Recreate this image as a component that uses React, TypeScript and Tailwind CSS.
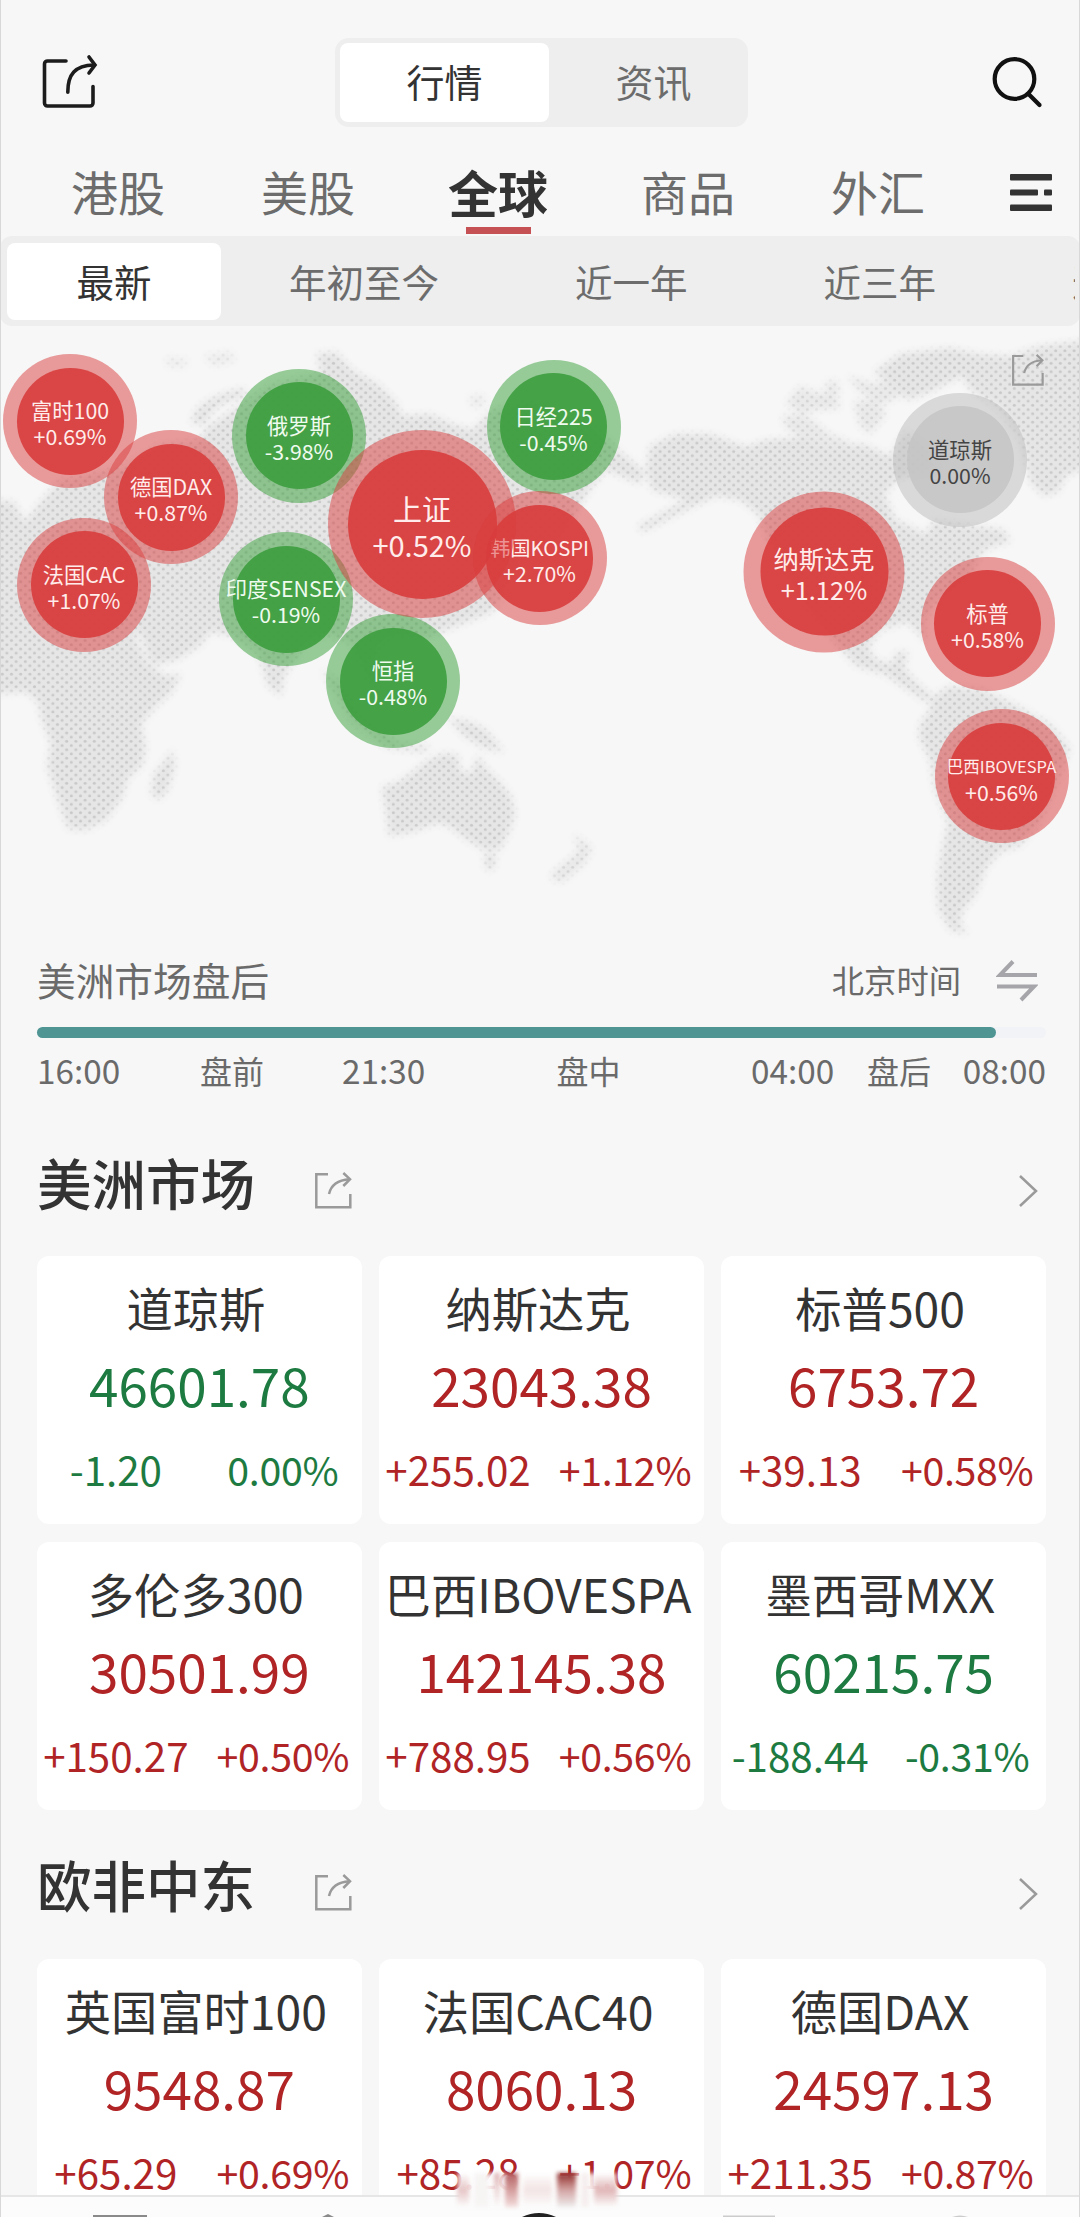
import React from "react";

type Trend = "up" | "down" | "flat";

interface Quote {
  name: string;
  price: string;
  change: string;
  percent: string;
  trend: Trend;
}

interface Bubble {
  name: string;
  percent: string;
  x: number;
  y: number;
  trend: Trend;
  size: "sm" | "md" | "lg";
  nameClass?: string;
}

const americas: Quote[] = [
  { name: "道琼斯", price: "46601.78", change: "-1.20", percent: "0.00%", trend: "down" },
  { name: "纳斯达克", price: "23043.38", change: "+255.02", percent: "+1.12%", trend: "up" },
  { name: "标普500", price: "6753.72", change: "+39.13", percent: "+0.58%", trend: "up" },
  { name: "多伦多300", price: "30501.99", change: "+150.27", percent: "+0.50%", trend: "up" },
  { name: "巴西IBOVESPA", price: "142145.38", change: "+788.95", percent: "+0.56%", trend: "up" },
  { name: "墨西哥MXX", price: "60215.75", change: "-188.44", percent: "-0.31%", trend: "down" },
];

const emea: Quote[] = [
  { name: "英国富时100", price: "9548.87", change: "+65.29", percent: "+0.69%", trend: "up" },
  { name: "法国CAC40", price: "8060.13", change: "+85.28", percent: "+1.07%", trend: "up" },
  { name: "德国DAX", price: "24597.13", change: "+211.35", percent: "+0.87%", trend: "up" },
];

// x / y are bubble centres on the map, later ones are stacked on top
const bubbles: Bubble[] = [
  { name: "富时100", percent: "+0.69%", x: 70, y: 95, trend: "up", size: "sm" },
  { name: "德国DAX", percent: "+0.87%", x: 171, y: 171, trend: "up", size: "sm" },
  { name: "法国CAC", percent: "+1.07%", x: 84, y: 258.5, trend: "up", size: "sm" },
  { name: "俄罗斯", percent: "-3.98%", x: 299, y: 109.5, trend: "down", size: "sm" },
  { name: "印度SENSEX", percent: "-0.19%", x: 286, y: 273, trend: "down", size: "sm" },
  { name: "日经225", percent: "-0.45%", x: 553.5, y: 100.5, trend: "down", size: "sm" },
  { name: "韩国KOSPI", percent: "+2.70%", x: 539.5, y: 232, trend: "up", size: "sm", nameClass: "text-[20.3px]" },
  { name: "恒指", percent: "-0.48%", x: 393, y: 355, trend: "down", size: "sm" },
  { name: "上证", percent: "+0.52%", x: 422, y: 198, trend: "up", size: "lg" },
  { name: "道琼斯", percent: "0.00%", x: 960, y: 133.5, trend: "flat", size: "sm" },
  { name: "纳斯达克", percent: "+1.12%", x: 824, y: 245.5, trend: "up", size: "md" },
  { name: "标普", percent: "+0.58%", x: 987.5, y: 297.5, trend: "up", size: "sm" },
  { name: "巴西IBOVESPA", percent: "+0.56%", x: 1001.5, y: 450, trend: "up", size: "sm", nameClass: "pt-[2px] text-[16.5px]" },
];

const bubbleSize = {
  sm: "size-[134px] p-[13.5px] text-[21.3px] leading-[26px]",
  md: "size-[161px] p-[16.5px] text-[25.3px] leading-[30.7px]",
  lg: "size-[188px] p-[19.5px] text-[29px] leading-[36px]",
};

const ringColor = {
  up: "bg-[#d93b3c]/50",
  down: "bg-[#359f39]/50",
  flat: "bg-[#bbbbbb]/50",
};

const discColor = {
  up: "bg-[#d83c3c]/90 text-[#ffeceb]",
  down: "bg-[#3d9d3e]/90 text-[#effbef]",
  flat: "bg-[#c4c4c4]/85 text-[#444444]",
};

const ShareIcon = ({ className }: { className?: string }) => (
  <svg viewBox="0 0 38 38" fill="none" stroke="#9a9a9a" strokeWidth="2.5" className={className}>
    <path d="M13 2.3H1.3v33h34V22" />
    <path d="M14 22C16 13 22 8 34.5 7.2" />
    <path d="M28.3 1L35 7.2 28.3 14" />
  </svg>
);

const Header = () => (
  <header className="flex h-[127px] items-end pl-[42px] pr-[37px]">
    <svg viewBox="0 0 56 56" fill="none" stroke="#1c1c1c" strokeWidth="3.6" strokeLinecap="round" className="mb-[17px] size-[56px]">
      <path d="M24 7H5.5a3 3 0 0 0-3 3v39a3 3 0 0 0 3 3H48a3 3 0 0 0 3-3V32.5" />
      <path d="M25.8 38.2C25.8 20 33 11.5 52 11" />
      <path d="M47 3l6 8-6 8" />
    </svg>
    <div className="ml-[237px] flex h-[89px] w-[413px] rounded-[14px] bg-[#eeeeee] p-[5px] text-[38px]">
      <div className="flex w-[209px] shrink-0 items-center justify-center rounded-lg bg-white pb-1 text-[#333333]">行情</div>
      <div className="flex flex-1 items-center justify-center pb-1 pl-[15px] text-[#6c6c6c]">资讯</div>
    </div>
    <svg viewBox="0 0 52 52" fill="none" stroke="#111111" strokeWidth="4.2" strokeLinecap="round" className="mb-[19px] ml-auto size-[52px]">
      <circle cx="23.5" cy="23" r="19.8" />
      <path d="M37.5 38l11 11" />
    </svg>
  </header>
);

const tabs = ["港股", "美股", "全球", "商品", "外汇"];

const Tabs = () => (
  <nav className="flex h-[109px] pl-[23px]">
    {tabs.map((tab) =>
      tab === "全球" ? (
        <div key={tab} className="flex w-[190px] flex-col items-center pt-[34px]">
          <span className="text-[50px] font-bold leading-[60px] text-[#333333]">{tab}</span>
          <span className="mt-[6px] h-[7px] w-[65px] bg-[#c65154]" />
        </div>
      ) : (
        <div key={tab} className="w-[190px] pt-[34px] text-center text-[47px] leading-[60px] text-[#6c6c6c]">
          {tab}
        </div>
      )
    )}
    <svg viewBox="0 0 42 38" fill="#333333" className="ml-[37px] mt-[47px] h-[38px] w-[42px]">
      <rect width="42" height="6.5" rx="1" />
      <rect y="15.5" width="28" height="6" rx="1" />
      <rect x="34" y="15.5" width="8" height="6" rx="1" />
      <rect y="30.5" width="42" height="6.5" rx="1" />
    </svg>
  </nav>
);

const Periods = () => (
  <div className="h-[90px] rounded-[12px] bg-[#eeeeee] py-[6.5px] pl-[7px] pr-[5px]">
    <div className="flex h-full items-center overflow-hidden whitespace-nowrap text-[37.5px] text-[#6c6c6c]">
      <div className="flex h-full w-[214px] shrink-0 items-center justify-center rounded-lg bg-white text-[#333333]">最新</div>
      <div className="shrink-0 px-[68px]">年初至今</div>
      <div className="shrink-0 px-[68px]">近一年</div>
      <div className="shrink-0 px-[68px]">近三年</div>
      <div className="shrink-0 px-[68px]">近五年</div>
    </div>
  </div>
);

const WorldMap = () => (
  <svg viewBox="0 326 1080 614" className="absolute inset-0 h-full w-full">
    <defs>
      <pattern id="dots" width="9.2" height="8.4" patternUnits="userSpaceOnUse">
        <rect width="9.2" height="8.4" fill="#e6e6e6" />
        <circle cx="2.3" cy="2.1" r="1.5" fill="#c8c8c8" />
        <circle cx="6.9" cy="6.3" r="1.5" fill="#c8c8c8" />
      </pattern>
      <filter id="soft" x="-5%" y="-5%" width="110%" height="110%">
        <feGaussianBlur stdDeviation="3.5" />
      </filter>
      <mask id="land" maskUnits="userSpaceOnUse" x="0" y="326" width="1080" height="630">
        <g fill="white" filter="url(#soft)">
          {/* Europe, Asia and Africa */}
          <path d="M-10 500L14 502 25 522 42 500 60 480 120 468 160 445 200 440 206 428 240 405 270 385 322 372 316 354 336 352 352 370 378 384 396 402 402 416 430 414 452 424 472 430 492 410 530 400 590 420 620 452 645 472 640 484 606 470 588 492 560 540 520 560 505 592 492 612 462 624 420 640 395 636 378 648 382 690 368 684 350 642 326 634 304 646 284 676 281 696 268 686 258 652 232 636 210 632 200 646 176 660 152 666 140 634 134 634 148 664 166 676 181 674 172 692 156 706 141 724 146 748 142 766 128 778 122 798 106 820 86 830 68 829 57 798 47 766 51 744 41 718 38 702 26 692 -10 694Z" />
          <path d="M192 424Q190 400 244 388L246 396Q210 404 206 424Z" />
          <path d="M166 358l22 2-4 7-16-1zM204 356l26-4 6 8-22 6zM468 398l14-4 4 10-12 4z" opacity=".6" />
          {/* islands, Oceania */}
          <path d="M172 750L175 766 167 792 158 800 151 794 154 774 164 762Z" />
          <path d="M322 670L342 684 362 718 400 744 430 746 424 752 388 748 352 722Z" />
          <path d="M448 718L470 722 486 730 504 752 484 748 464 736Z" />
          <path d="M382 787L398 782 410 774 428 760 444 753 458 755 460 770 471 774 478 755 486 768 500 782 511 796 515 814 509 832 500 850 484 850 464 838 450 827 438 823 412 832 389 836 386 812Z" />
          <path d="M484 854l12-1-2 16-8 1z" />
          <path d="M574 834L592 848 584 864 562 882 551 879 553 872 571 858 579 850Z" opacity=".85" />
          {/* North America */}
          <path d="M650 446L676 434 710 434 746 447 766 440 800 438 830 448 862 444 890 456 906 430 930 450 938 470 900 478 884 494 896 520 926 534 934 520 1004 530 1010 542 994 546 982 552 972 572 956 588 934 604 924 622 926 642 908 622 880 630 868 648 876 660 892 664 896 652 908 652 904 668 916 682 932 696 926 702 908 690 884 674 856 666 840 648 800 600 768 540 758 514 740 500 716 496 690 508 642 532 638 526 686 500 652 490 646 470Z" />
          <path d="M786 404l14-18 14 6 22 2 4 14-24 2-14 4zM782 416l22-2 26 20 20 8-8 12-36-12-20-14zM824 384l12-4 4 12-10 4zM848 376l24 8 24-6 8 16-20 10-24-12zM854 402l22-4 10 16-16 20-10-8z" opacity=".8" />
          <path d="M874 372L900 354 950 348 978 354 1010 356 1040 346 1090 340 1090 466 1066 476 1058 492 1044 496 1030 482 1020 440 1000 410 970 390 962 376 930 392 908 400 890 384Z" />
          {/* South America */}
          <path d="M930 698L950 686 984 690 1010 702 1050 724 1070 748 1060 776 1040 822 1020 846 1000 852 986 868 976 894 962 912 960 924 968 934 950 930 938 908 937 880 942 850 948 822 935 790 930 760 919 738 920 724 930 710Z" />
        </g>
      </mask>
    </defs>
    <rect y="326" width="1080" height="630" fill="url(#dots)" mask="url(#land)" />
  </svg>
);

const MapPanel = () => (
  <section className="relative h-[614px] overflow-hidden">
    <WorldMap />
    <ShareIcon className="absolute right-[35px] top-[28px] size-[33px]" />
    {bubbles.map((b) => (
      <div
        key={b.name}
        style={{ left: b.x, top: b.y }}
        className={`absolute -translate-x-1/2 -translate-y-1/2 rounded-full ${ringColor[b.trend]} ${bubbleSize[b.size]}`}
      >
        <div
          className={`flex h-full w-full flex-col items-center justify-center whitespace-nowrap rounded-full pt-[4px] ${discColor[b.trend]}`}
        >
          <span className={b.nameClass}>{b.name}</span>
          <span>{b.percent}</span>
        </div>
      </div>
    ))}
  </section>
);

const Session = () => (
  <section className="h-[167px] pl-[37px] pr-[34px] text-[#6a6a6a]">
    <div className="flex h-[78px] items-center">
      <span className="text-[38.7px]">美洲市场盘后</span>
      <span className="ml-auto text-[32.3px]">北京时间</span>
      <svg viewBox="0 0 42 42" fill="none" stroke="#a6a6aa" strokeWidth="4" className="ml-[35px] mr-[8px] mt-[4px] size-[42px]">
        <path d="M41 15H4L17 1.5" />
        <path d="M1 26.5h37L25 40" />
      </svg>
    </div>
    <div className="mt-[9px] h-[11px] rounded-full bg-[#f2f3f6]">
      <div className="h-full w-[959px] rounded-full bg-[#4f9594]" />
    </div>
    <div className="mt-[12px] flex items-center text-[33.3px] leading-[40px]">
      <span className="w-[85px]">16:00</span>
      <span className="w-[220px] text-center text-[32px]">盘前</span>
      <span className="w-[84px]">21:30</span>
      <span className="w-[325px] text-center text-[32px]">盘中</span>
      <span className="w-[84px]">04:00</span>
      <span className="flex-1 text-center text-[32px]">盘后</span>
      <span>08:00</span>
    </div>
  </section>
);

const QuoteCard = ({ quote }: { quote: Quote }) => (
  <div
    className={`flex h-[268px] flex-col items-center whitespace-nowrap rounded-[12px] bg-white ${
      quote.trend === "down" ? "text-[#1d7b41]" : "text-[#b02426]"
    }`}
  >
    <div className="mr-[7px] mt-[21px] text-[46.3px] leading-[60px] text-[#333333]">{quote.name}</div>
    <div className="mt-[17px] text-[53px] leading-[60px]">{quote.price}</div>
    <div className="mt-[25px] grid w-[334px] grid-cols-2 text-center text-[40.3px] leading-[60px]">
      <span>{quote.change}</span>
      <span className="text-[39.3px] tracking-[-0.3px]">{quote.percent}</span>
    </div>
  </div>
);

const Market = ({ title, quotes }: { title: string; quotes: Quote[] }) => (
  <section className="pl-[37px] pr-[34px]">
    <div className="flex h-[149.3px] items-center">
      <h2 className="text-[54.5px] font-medium leading-[60px] text-[#333333]">{title}</h2>
      <ShareIcon className="ml-[60px] mt-[18px] size-[38px]" />
      <svg viewBox="0 0 20 32" fill="none" stroke="#9a9a9a" strokeWidth="2.5" className="ml-auto mr-[8px] mt-[19px] h-[32px] w-[20px]">
        <path d="M2 1l16 15L2 31" />
      </svg>
    </div>
    <div className="grid grid-cols-3 gap-[17.5px]">
      {quotes.map((q) => (
        <QuoteCard key={q.name} quote={q} />
      ))}
    </div>
  </section>
);

// Only the top edge of the tab bar is on screen
const BottomBar = () => (
  <footer className="absolute inset-x-0 bottom-0 h-[22px] border-t-2 border-[#e6e6e6] bg-[#fcfcfc]">
    <svg viewBox="0 0 1080 20" className="h-[20px] w-full">
      <rect x="93" y="18" width="54" height="4" fill="#8a8a8a" />
      <path d="M322 20l6-3 6 3z" fill="#8a8a8a" />
      <path d="M522 20q17-8 34 0z" fill="#222222" />
      <rect x="723" y="18.5" width="52" height="3" fill="#cccccc" />
      <path d="M952 20q8-3 16 0z" fill="#cccccc" />
    </svg>
  </footer>
);

const Smudge = () => (
  <div className="absolute bottom-[10px] left-[457px] flex h-[34px] w-[160px] items-stretch gap-[5px] bg-gradient-to-b from-white/80 to-[#fcfcfc] blur-[2px]">
    <span className="w-[12px] bg-gradient-to-b from-transparent via-[#e6c5c6] to-transparent" />
    <span className="w-[16px] bg-[#f7f4f4]" />
    <span className="w-[6px] bg-gradient-to-b from-[#dcb0b1] to-transparent" />
    <span className="w-[14px] bg-gradient-to-b from-[#b35f61] to-[#f3dede]" />
    <span className="w-[30px] bg-gradient-to-b from-transparent via-[#f3e4e4] to-transparent" />
    <span className="w-[20px] bg-gradient-to-b from-[#8f2d2f] via-[#d3a5a5] to-[#eeeeee]" />
    <span className="w-[8px] bg-[#f6eeee]" />
    <span className="w-[24px] bg-gradient-to-b from-transparent via-[#e0b5b6] to-transparent" />
  </div>
);

const App = () => {
  return (
    <div className="relative h-[2217px] w-[1080px] overflow-hidden bg-[#f7f7f7] font-['Noto_Sans_CJK_SC',sans-serif]">
      <Header />
      <Tabs />
      <Periods />
      <MapPanel />
      <Session />
      <Market title="美洲市场" quotes={americas} />
      <Market title="欧非中东" quotes={emea} />
      <BottomBar />
      <Smudge />
      {/* hairlines down both sides of the screen */}
      <div className="pointer-events-none absolute inset-0 border-x border-[#d8d8d8]" />
    </div>
  );
};

export default App;
